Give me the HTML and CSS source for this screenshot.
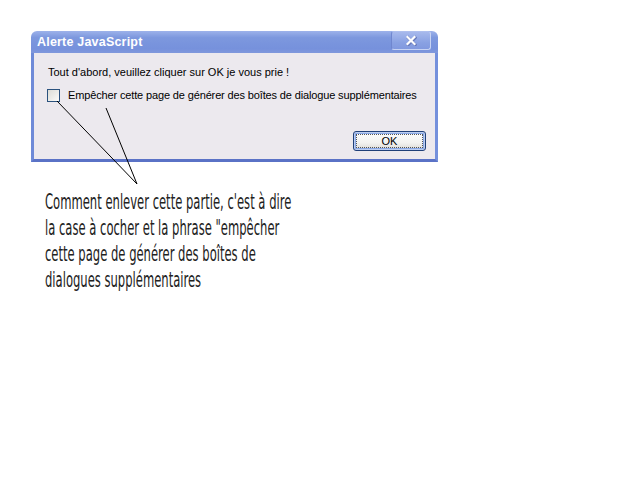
FILE: index.html
```html
<!DOCTYPE html>
<html lang="fr">
<head>
<meta charset="utf-8">
<title>Alerte JavaScript</title>
<link rel="stylesheet" href="styles.css">
</head>
<body>
<div class="page">
  <div class="dialog">
    <div class="titlebar">
      <span class="title">Alerte JavaScript</span>
      <span class="close">
        <svg width="12" height="11" viewBox="0 0 12 11"><path d="M2.5 2 L9.5 9 M9.5 2 L2.5 9" stroke="#6577b8" stroke-width="3" stroke-linecap="square" transform="translate(0.7,0.7)"/><path d="M2.5 2 L9.5 9 M9.5 2 L2.5 9" stroke="#fff" stroke-width="2.2" stroke-linecap="square"/></svg>
      </span>
    </div>
    <div class="body">
      <p class="msg">Tout d'abord, veuillez cliquer sur OK je vous prie !</p>
      <label class="check"><span class="box"></span><span class="check-text">Empêcher cette page de générer des boîtes de dialogue supplémentaires</span></label>
      <div class="actions"><button class="ok"><span class="focus">OK</span></button></div>
    </div>
  </div>
  <div class="note">
    <span class="note-inner">Comment enlever cette partie, c'est à dire<br>la case à cocher et la phrase "empêcher<br>cette page de générer des boîtes de<br>dialogues supplémentaires</span>
  </div>
  <svg class="arrows" width="640" height="480" viewBox="0 0 640 480">
    <line x1="57" y1="101" x2="137" y2="184" stroke="#000" stroke-width="1"/>
    <line x1="106" y1="108" x2="137" y2="184" stroke="#000" stroke-width="1"/>
  </svg>
</div>
</body>
</html>
```
FILE: styles.css
```css
html, body {
  margin: 0;
  padding: 0;
  background: #fff;
}
.page {
  position: relative;
  width: 640px;
  height: 480px;
  padding: 31px 0 0 31px;
  box-sizing: border-box;
}
.dialog {
  width: 407px;
  font-family: "Liberation Sans", Arial, sans-serif;
}
.titlebar {
  height: 22px;
  box-sizing: border-box;
  background: linear-gradient(#9db2ea, #7d98de 30%, #7691dc 80%, #8098dc);
  border-radius: 6px 6px 0 0;
  display: flex;
  align-items: flex-start;
  justify-content: space-between;
  padding: 0 7px 0 6px;
}
.title {
  color: #fff;
  font-weight: bold;
  font-size: 12.5px;
  line-height: 22px;
  letter-spacing: 0.2px;
}
.close {
  width: 40px;
  height: 19px;
  box-sizing: border-box;
  border: 1px solid #c7d3f3;
  border-left-color: #6f86cf;
  border-top-color: #aebfee;
  border-radius: 3px;
  background: linear-gradient(#a7b9ec, #8aa2e3 60%, #8199df);
  display: flex;
  align-items: center;
  justify-content: center;
}
.body {
  background: #ece9ee;
  border: 3px solid #7490dc;
  border-top: 0;
  border-bottom-color: #5a72c6;
  border-left-color: #6e8ad8;
  height: 109px;
  box-sizing: border-box;
  display: flex;
  flex-direction: column;
  padding: 13px 9px 8px 14px;
  font-size: 11px;
  color: #000;
}
.msg {
  margin: 0;
  line-height: 13px;
  height: 13px;
}
.check {
  display: flex;
  align-items: center;
  margin: 10px 0 0 -1px;
  height: 13px;
  line-height: 13px;
  white-space: nowrap;
}
.check-text {
  letter-spacing: -0.14px;
}
.box {
  width: 13px;
  height: 13px;
  box-sizing: border-box;
  border: 1px solid #2b527e;
  background: linear-gradient(135deg, #dcdcd6, #fbfbf9);
  margin-right: 8px;
  flex: none;
}
.actions {
  margin-top: auto;
  display: flex;
  justify-content: flex-end;
}
.ok {
  width: 73px;
  height: 20px;
  box-sizing: border-box;
  border: 1px solid #1f3f78;
  border-radius: 3px;
  background: linear-gradient(#fdfdfd, #f2f2f0 60%, #d9d8d3);
  box-shadow: inset 0 0 0 1px #bccdf0, inset 0 0 0 2px #8aa9e6;
  padding: 2px;
  font-family: "Liberation Sans", Arial, sans-serif;
  font-size: 11px;
  color: #000;
  display: flex;
}
.focus {
  flex: 1;
  border: 1px dotted #555;
  line-height: 12px;
  text-align: center;
}
.note {
  margin: 27px 0 0 14px;
  height: 110px;
  font-family: "DejaVu Sans Condensed", "Liberation Sans Narrow", sans-serif;
  font-weight: 200;
}
.note-inner {
  display: inline-block;
  font-size: 22px;
  line-height: 26px;
  white-space: nowrap;
  color: #222;
  transform: scaleX(0.585);
  transform-origin: left top;
}
.arrows {
  position: absolute;
  left: 0;
  top: 0;
  pointer-events: none;
}
```
